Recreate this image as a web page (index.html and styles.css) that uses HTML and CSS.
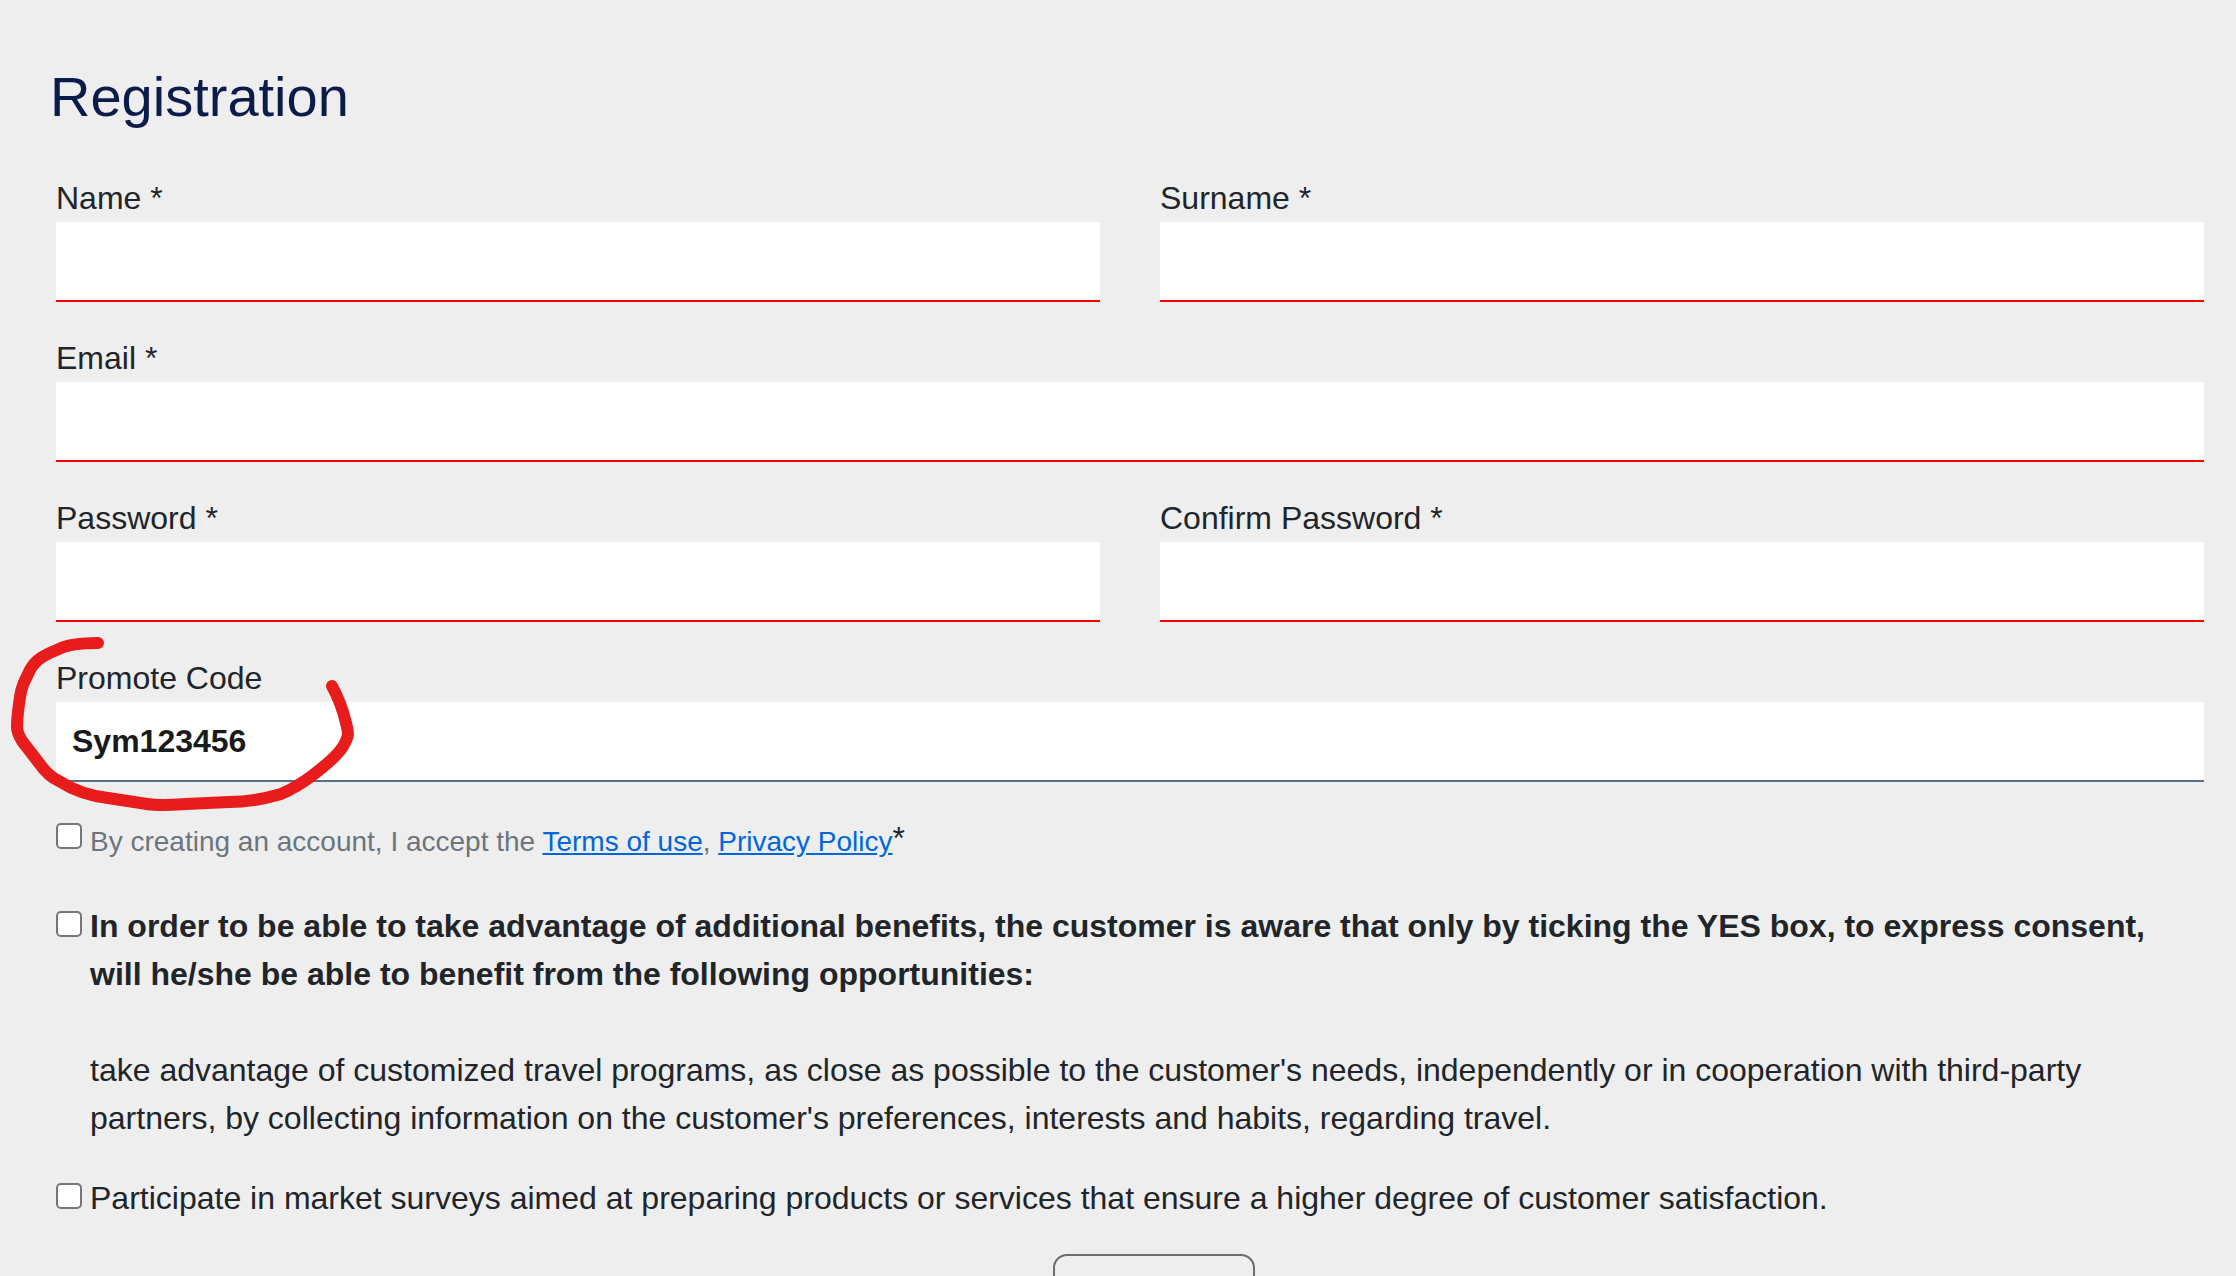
FILE: index.html
```
<!DOCTYPE html>
<html lang="en">
<head>
    <meta charset="UTF-8">
    <meta name="viewport" content="width=device-width, initial-scale=1.0">
    <title>Registration</title>
    <link rel="stylesheet" href="styles.css">
</head>
<body>
    <main class="page">
        <h1>Registration</h1>

        <form id="registrationForm">
            <div class="row">
                <div class="field">
                    <label for="name">Name *</label>
                    <input type="text" id="name" class="required" required>
                </div>
                <div class="field">
                    <label for="surname">Surname *</label>
                    <input type="text" id="surname" class="required" required>
                </div>
            </div>

            <div class="field">
                <label for="email">Email *</label>
                <input type="email" id="email" class="required" required>
            </div>

            <div class="row">
                <div class="field">
                    <label for="password">Password *</label>
                    <input type="password" id="password" class="required" required>
                </div>
                <div class="field">
                    <label for="confirmPassword">Confirm Password *</label>
                    <input type="password" id="confirmPassword" class="required" required>
                </div>
            </div>

            <div class="field">
                <label for="promoteCode">Promote Code</label>
                <input type="text" id="promoteCode" value="Sym123456">
                <!-- Hand drawn circle over the code -->
                <svg class="marker" width="360" height="184" viewBox="0 632 360 184" aria-hidden="true">
                    <path d="M98 643 C79 643 65 646 59 649 C44 655 35 660 30 670 C24 682 21 688 20 697 C18 710 17 718 17 727 C17 732 19 736 22 741 L39 763 C46 773 52 778 59 781 C76 792 91 796 108 798 L147 804 C160 806 171 805 186 804 L229 802 C250 802 264 799 281 794 C293 789 301 784 313 775 C326 765 336 757 342 748 C349 737 349 734 346 723 C343 710 338 697 332 686"/>
                </svg>
            </div>

            <div class="check">
                <input type="checkbox" id="terms" required>
                <label for="terms"><small>By creating an account, I accept the <a href="#terms">Terms of use</a>, <a href="#privacy">Privacy Policy</a></small></label>
                <span class="star">*</span>
            </div>

            <div class="check">
                <input type="checkbox" id="benefits">
                <label for="benefits">
                    <strong>In order to be able to take advantage of additional benefits, the customer is aware that only by ticking the YES box, to express consent, will he/she be able to benefit from the following opportunities:</strong>
                    <br><br>
                    take advantage of customized travel programs, as close as possible to the customer's needs, independently or in cooperation with third-party partners, by collecting information on the customer's preferences, interests and habits, regarding travel.
                </label>
            </div>

            <div class="check">
                <input type="checkbox" id="surveys">
                <label for="surveys">Participate in market surveys aimed at preparing products or services that ensure a higher degree of customer satisfaction.</label>
            </div>

            <div class="actions">
                <button type="submit" aria-label="Register"></button>
            </div>
        </form>
    </main>
</body>
</html>
```
FILE: styles.css
```
* {
    box-sizing: border-box;
}

body {
    margin: 0;
    background-color: #eee;
    color: #212529;
    font-family: "Liberation Sans", Arial, sans-serif;
    font-size: 32px;
    line-height: 48px;
}

.page {
    height: 100vh;
    padding: 64px 32px 0 50px;
    overflow: hidden;
}

h1 {
    margin: 0 0 44px;
    color: #0c1c4a;
    font-size: 56px;
    font-weight: 400;
    line-height: 66px;
}

form {
    display: flex;
    flex-direction: column;
    gap: 32px;
    padding-left: 6px;
}

.row {
    display: grid;
    grid-template-columns: 1fr 1fr;
    gap: 60px;
}

.field {
    position: relative;
}

.field label {
    display: block;
}

.field input {
    display: block;
    width: 100%;
    height: 80px;
    padding: 0 16px;
    border: none;
    border-bottom: 2px solid #566f88;
    border-radius: 0;
    outline: none;
    background-color: #fff;
    color: #1a1a1a;
    font-family: inherit;
    font-size: 32px;
    font-weight: bold;
}

.field input.required {
    border-bottom-color: #f00;
}

.marker {
    position: absolute;
    top: -22px;
    left: -56px;
    pointer-events: none;
}

.marker path {
    fill: none;
    stroke: #e81c1c;
    stroke-width: 12;
    stroke-linecap: round;
    stroke-linejoin: round;
}

/* Consent boxes */
.check {
    display: flex;
    align-items: flex-start;
}

.check input {
    appearance: none;
    flex: none;
    width: 26px;
    height: 26px;
    margin: 9px 8px 0 0;
    border: 2px solid #767676;
    border-radius: 5px;
    background-color: #fff;
}

.check input:checked {
    background-color: #0066dc;
}

.check small {
    display: block;
    color: #6c757d;
    font-size: 28px;
    line-height: 56px;
}

.check a {
    color: #0066dc;
}

.actions {
    padding-left: 48px;
    text-align: center;
}

button {
    width: 202px;
    height: 76px;
    border: 2px solid #6c6c70;
    border-radius: 14px;
    background-color: transparent;
    cursor: pointer;
}
```
